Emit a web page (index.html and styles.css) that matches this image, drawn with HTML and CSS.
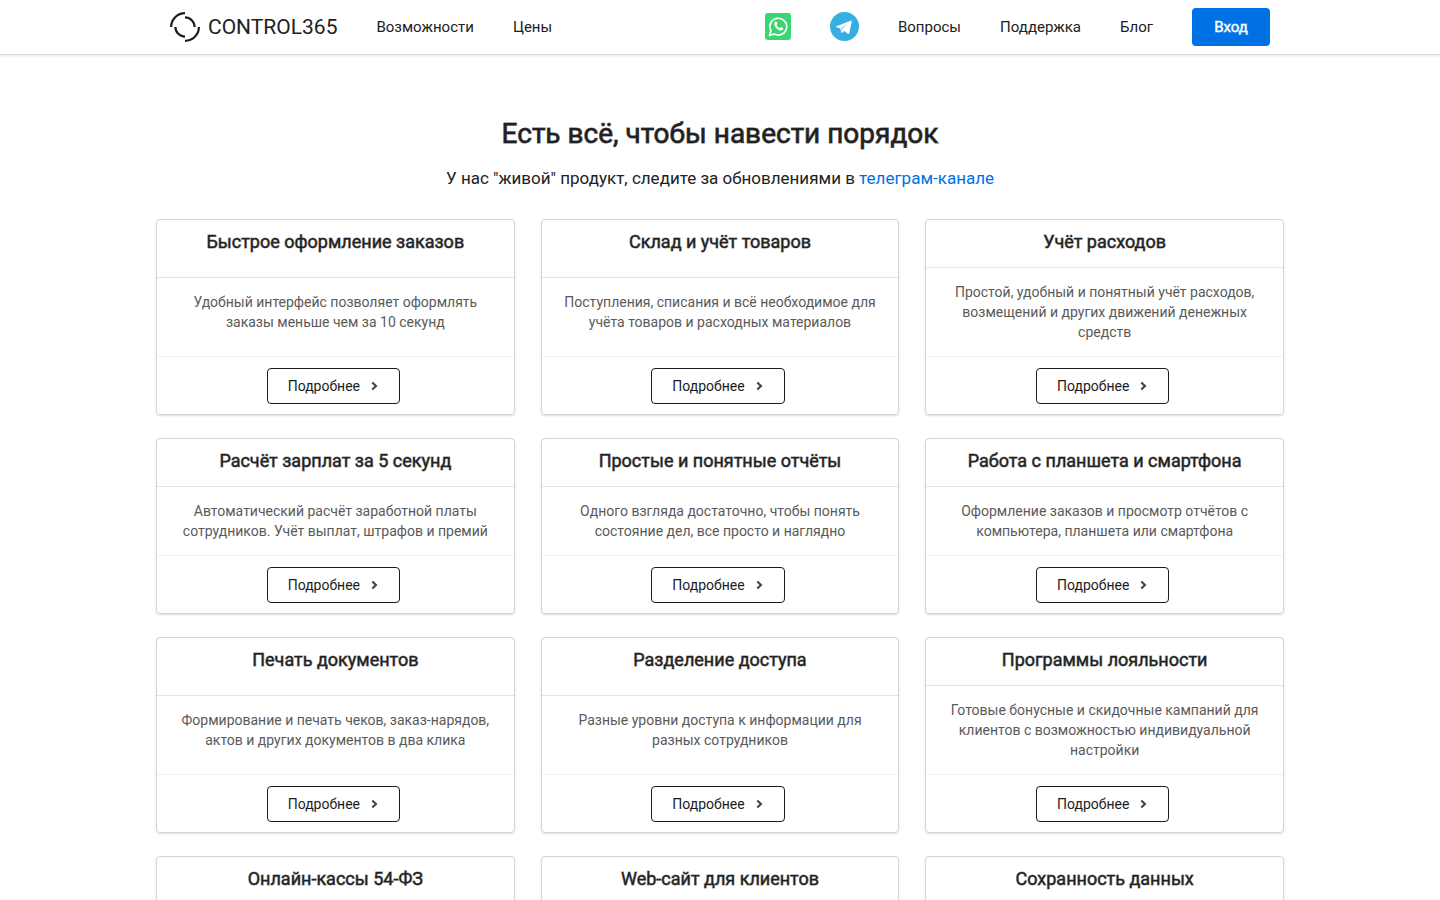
FILE: index.html
```html
<!DOCTYPE html>
<html lang="ru">
<head>
  <meta charset="UTF-8" />
  <meta name="viewport" content="width=device-width, initial-scale=1.0"/>
  <title>CONTROL365</title>
  <link rel="stylesheet" href="styles.css">
</head>
<body>
  <svg class="sprite" aria-hidden="true">
    <symbol id="chevron" viewBox="0 0 7 10">
      <path d="M1.3 1.5 5 5 1.3 8.5" fill="none" stroke="#444" stroke-width="2.1"/>
    </symbol>
  </svg>

  <header class="header">
    <nav class="nav">
      <a class="logo" href="#">
        <svg class="logo-icon" viewBox="0 0 30 30" fill="none" stroke="#1b1c1d" stroke-width="2.2">
          <path d="M1.1 15A13.9 13.9 0 0 1 15 1.1M28.9 15A13.9 13.9 0 0 1 15 28.9M15 5.4A9.6 9.6 0 0 1 24.6 15M15 24.6A9.6 9.6 0 0 1 5.4 15"/>
        </svg>
        <span>CONTROL365</span>
      </a>
      <a class="nav-link" href="#features">Возможности</a>
      <a class="nav-link" href="#">Цены</a>
      <div class="nav-right">
        <a class="social" href="#" aria-label="WhatsApp">
          <svg class="whatsapp" viewBox="0 0 26 27">
            <rect width="26" height="27" rx="3" fill="#3bd671"/>
            <path d="M4.5 22.5 5.9 17.7A8.4 8.4 0 1 1 9 20.9Z" fill="none" stroke="#fff" stroke-width="1.6" stroke-linejoin="round"/>
            <path d="M10.1 8.8c.4-.4 1.1-.5 1.4.1l.8 1.7c.2.5-.5 1.1-.8 1.5.8 1.6 1.8 2.4 3.3 3.1.4-.3.9-1.3 1.4-1.1l1.8.9c.5.3.2 1.3-.3 1.8-2.8 2.6-9.8-3.4-8.2-7.3.1-.3.3-.5.6-.7Z" fill="#fff"/>
          </svg>
        </a>
        <a class="social" href="#" aria-label="Telegram">
          <svg class="telegram" viewBox="0 0 29 29">
            <circle cx="14.5" cy="14.5" r="14.5" fill="#37aee2"/>
            <path d="M6 14.4 20.6 8.7c.8-.3 1.3.2 1.1 1L19.3 21c-.2.9-.7 1.1-1.4.7l-3.7-2.7-1.8 1.7c-.3.3-.9.2-1-.3l-1.2-4-4-1.3c-.7-.2-.8-.5-.2-.7Z" fill="#fff"/>
            <path d="m10.7 16.1 7.9-5.2-6.1 6.2-.5 3.3Z" fill="#a9d6ee"/>
          </svg>
        </a>
        <a class="nav-link" href="#">Вопросы</a>
        <a class="nav-link" href="#">Поддержка</a>
        <a class="nav-link" href="#">Блог</a>
        <button class="login" type="button">Вход</button>
      </div>
    </nav>
  </header>

  <main class="container" id="features">
    <h1>Есть всё, чтобы навести порядок</h1>
    <p class="subtitle">У нас "живой" продукт, следите за обновлениями в <a href="#">телеграм-канале</a></p>

    <div class="cards">
      <article class="card">
        <h2>Быстрое оформление заказов</h2>
        <p>Удобный интерфейс позволяет оформлять заказы меньше чем за 10 секунд</p>
        <div class="card-footer"><button class="more" type="button">Подробнее<svg><use href="#chevron"/></svg></button></div>
      </article>
      <article class="card">
        <h2>Склад и учёт товаров</h2>
        <p>Поступления, списания и всё необходимое для учёта товаров и расходных материалов</p>
        <div class="card-footer"><button class="more" type="button">Подробнее<svg><use href="#chevron"/></svg></button></div>
      </article>
      <article class="card">
        <h2>Учёт расходов</h2>
        <p>Простой, удобный и понятный учёт расходов, возмещений и других движений денежных средств</p>
        <div class="card-footer"><button class="more" type="button">Подробнее<svg><use href="#chevron"/></svg></button></div>
      </article>

      <article class="card">
        <h2>Расчёт зарплат за 5 секунд</h2>
        <p>Автоматический расчёт заработной платы сотрудников. Учёт выплат, штрафов и премий</p>
        <div class="card-footer"><button class="more" type="button">Подробнее<svg><use href="#chevron"/></svg></button></div>
      </article>
      <article class="card">
        <h2>Простые и понятные отчёты</h2>
        <p>Одного взгляда достаточно, чтобы понять состояние дел, все просто и наглядно</p>
        <div class="card-footer"><button class="more" type="button">Подробнее<svg><use href="#chevron"/></svg></button></div>
      </article>
      <article class="card">
        <h2>Работа с планшета и смартфона</h2>
        <p>Оформление заказов и просмотр отчётов с компьютера, планшета или смартфона</p>
        <div class="card-footer"><button class="more" type="button">Подробнее<svg><use href="#chevron"/></svg></button></div>
      </article>

      <article class="card">
        <h2>Печать документов</h2>
        <p>Формирование и печать чеков, заказ-нарядов, актов и других документов в два клика</p>
        <div class="card-footer"><button class="more" type="button">Подробнее<svg><use href="#chevron"/></svg></button></div>
      </article>
      <article class="card">
        <h2>Разделение доступа</h2>
        <p>Разные уровни доступа к информации для разных сотрудников</p>
        <div class="card-footer"><button class="more" type="button">Подробнее<svg><use href="#chevron"/></svg></button></div>
      </article>
      <article class="card">
        <h2>Программы лояльности</h2>
        <p>Готовые бонусные и скидочные кампаний для клиентов с возможностью индивидуальной настройки</p>
        <div class="card-footer"><button class="more" type="button">Подробнее<svg><use href="#chevron"/></svg></button></div>
      </article>

      <article class="card">
        <h2>Онлайн-кассы 54-ФЗ</h2>
      </article>
      <article class="card">
        <h2>Web-сайт для клиентов</h2>
      </article>
      <article class="card">
        <h2>Сохранность данных</h2>
      </article>
    </div>
  </main>
</body>
</html>
```
FILE: styles.css
```css
* {
  box-sizing: border-box;
}

body {
  margin: 0;
  font-family: Roboto, "Liberation Sans", sans-serif;
  font-size: 14px;
  line-height: 20px;
  color: #212121;
  background: #fff;
}

a {
  color: #0071e3;
  text-decoration: none;
}

h1, h2, p {
  margin: 0;
}

button {
  font-family: inherit;
  cursor: pointer;
}

.sprite {
  display: none;
}

/* header */
.header {
  border-bottom: 1px solid #d8d8d9;
  box-shadow: 0 1px 2px rgba(34, 36, 38, 0.1);
}

.nav {
  display: flex;
  align-items: center;
  gap: 39px;
  max-width: 1128px;
  min-height: 54px;
  margin: 0 auto;
  padding: 0 14px 1px;
}

.logo {
  display: flex;
  align-items: center;
  gap: 8px;
  font-size: 21px;
  color: #212121;
}

.logo-icon {
  width: 30px;
  height: 30px;
}

.nav-link {
  font-size: 15px;
  color: #212121;
}

.nav-right {
  display: flex;
  align-items: center;
  gap: 39px;
  margin-left: auto;
}

.social svg {
  display: block;
}

.whatsapp {
  width: 26px;
  height: 27px;
}

.telegram {
  width: 29px;
  height: 29px;
}

.login {
  width: 78px;
  height: 38px;
  border: 0;
  border-radius: 4px;
  background: #0071e3;
  color: #fff;
  font-size: 15px;
  -webkit-text-stroke: 1px rgba(255, 255, 255, 0.5);
}

/* content */
.container {
  max-width: 1128px;
  margin: 0 auto;
  padding: 61px 0 24px;
}

h1 {
  font-size: 28px;
  font-weight: 400;
  line-height: 36px;
  text-align: center;
  -webkit-text-stroke: 1px rgba(33, 33, 33, 0.7);
}

.subtitle {
  margin: 14px 0 29px;
  font-size: 17px;
  line-height: 24px;
  text-align: center;
}

.cards {
  display: grid;
  grid-template-columns: repeat(3, 1fr);
  gap: 23px 26px;
}

.card {
  display: flex;
  flex-direction: column;
  border: 1px solid #d4d4d5;
  border-radius: 4px;
  box-shadow: 0 1px 2px rgba(34, 36, 38, 0.15);
  text-align: center;
}

.card h2 {
  flex: 1 1 auto;
  padding: 10px 14px 13px;
  font-size: 18px;
  font-weight: 400;
  line-height: 24px;
  -webkit-text-stroke: 1px rgba(33, 33, 33, 0.5);
}

.card p {
  flex: 1 1 auto;
  padding: 14px;
  border-top: 1px solid #e4e4e5;
  color: #5a5a5a;
}

.card-footer {
  padding: 11px 4px 10px 0;
  border-top: 1px solid #f0f0f0;
}

.more {
  display: inline-flex;
  align-items: center;
  gap: 11px;
  height: 36px;
  padding: 0 21px 0 20px;
  border: 1px solid #1b1c1d;
  border-radius: 4px;
  background: #fff;
  color: #1b1c1d;
  font-size: 14px;
  vertical-align: top;
}

.more svg {
  width: 7px;
  height: 10px;
}

@media (max-width: 1100px) {
  .nav {
    flex-wrap: wrap;
  }

  .cards {
    grid-template-columns: 1fr;
  }
}
```
